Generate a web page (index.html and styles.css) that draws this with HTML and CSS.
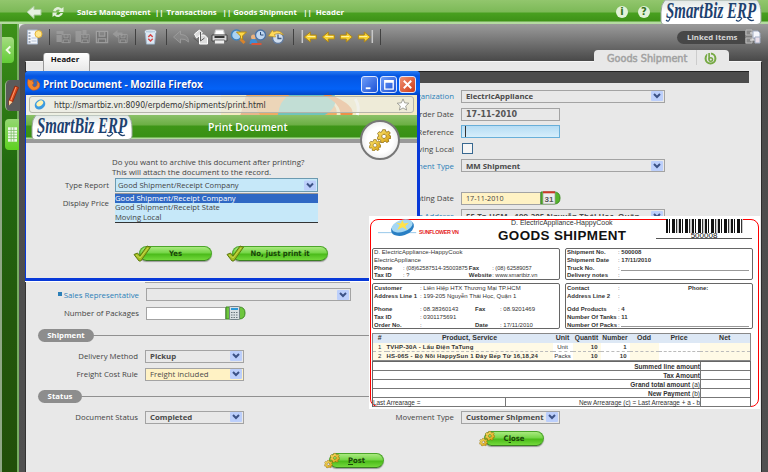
FILE: index.html
```html
<!DOCTYPE html>
<html lang="en">
<head>
<meta charset="utf-8">
<title>Goods Shipment</title>
<link rel="stylesheet" href="styles.css">
</head>
<body>
<svg class="defs" width="0" height="0">
  <defs>
    <linearGradient id="gold" x1="0" y1="0" x2="1" y2="1"><stop offset="0" stop-color="#ffe873"/><stop offset="1" stop-color="#d39a08"/></linearGradient>
    <linearGradient id="logobg" x1="0" y1="0" x2="0" y2="1"><stop offset="0" stop-color="#dfe6e4"/><stop offset=".5" stop-color="#fff"/></linearGradient>
    <symbol id="gear" viewBox="0 0 20 20"><path d="M8 1h4l.5 2.6 1.8.8L16.600 3 19 5.700 17.300 7.700l.6 1.700 2.100.8-.5 3.400-2.500.2-1 1.700 1 2.100-3 1.800-1.800-1.700-2 .1L8.500 20 5.200 18.800l.2-2.500L4 15l-2.600.3L0 12l2.200-1.300.1-2L.7 6.600 3 3.800l2.300.9L7.200 3.600ZM10 7.500a3 3 0 1 0 .01 0Z" fill="url(#gold)" stroke="#805f08" stroke-width="1" fill-rule="evenodd"/></symbol>
    <symbol id="gears" viewBox="0 0 24 24"><use href="#gear" x="9" y="1" width="14" height="14"/><use href="#gear" x="1" y="11" width="12" height="12"/></symbol>
    <symbol id="check" viewBox="0 0 18 17"><path d="M1 9.500 4.500 8 7 11 14 1 17.500 2.200 7.800 16H6Z" fill="#a3bd20" stroke="#5c7a10"/><path d="M3 10 7 13 15 3" fill="none" stroke="#c7d851"/></symbol>
    <symbol id="arrow" viewBox="0 0 14 12"><path d="M1 6 7 1v3h6v4H7v3Z" fill="#f7d231" stroke="#ad841b"/><path d="M4 5.500h8" stroke="#fff2a0"/></symbol>
    <symbol id="chev" viewBox="0 0 12 10"><rect width="12" height="10" rx="1" fill="#bccffb"/><path d="M3 3 6 6 9 3" fill="none" stroke="#3c5286" stroke-width="2"/></symbol>
    <symbol id="logo" viewBox="0 0 102 25"><path d="M5 0H97Q101 4 101 14V21Q101 24.500 97 24.500H4Q1 24.500 1 21V12Q1 4 5 0Z" fill="url(#logobg)" stroke="#9aa79b"/><text x="6" y="18" textLength="90" lengthAdjust="spacingAndGlyphs" class="logo-text">SmartBiz ERP</text><path d="M10 18Q9 23 6 20M82 18Q79 23 76 20M87 17Q90 22 94 20" fill="none" stroke="#1d416f" stroke-width="1.200"/></symbol>
    <symbol id="save" viewBox="0 0 16 16"><path d="M2 2H14V14H2Z M5 2V7H11V2 M4 14V10H12V14" fill="#707070" stroke="#a9a9a9" stroke-width="1.300"/></symbol>
  </defs>
</svg>

<div class="app">
  <header class="topbar">
    <svg class="back" viewBox="0 0 16 14"><path d="M1 7 8 1V4.500H15V10H8V13.500Z" fill="#e5f1df" stroke="#a9cc9c"/></svg>
    <svg class="refresh" viewBox="0 0 14 14"><path d="M2 6A5 5 0 0 1 10.500 3.500L12.500 2V7H7.500L9 5A3 3 0 0 0 4.500 6.500ZM12 8A5 5 0 0 1 3.500 10.500L1.500 12V7.500H6.500L5 9.200A3 3 0 0 0 9.500 8Z" fill="#e1efda"/></svg>
    <nav class="crumbs"><span class="c1">Sales Management</span><span>||</span><span class="c2">Transactions</span><span>||</span><span class="c3">Goods Shipment</span><span>||</span><span class="c4">Header</span></nav>
    <span class="round">i</span><span class="round">?</span>
    <svg class="logo"><use href="#logo"/></svg>
  </header>

  <div class="body">
    <aside class="side">
      <div class="tab collapse"><svg viewBox="0 0 10 10"><path d="M7 1 3 5 7 9" fill="none" stroke="#f3ffe9" stroke-width="2.200"/></svg></div>
      <div class="tab edit"><svg viewBox="0 0 12 22"><path d="M8 1 11.500 2.500 5.500 17 2 20 2 15.500Z" fill="#dc4a1c" stroke="#8d2d13"/><path d="M2 15.500 5.500 17 2 20.500Z" fill="#f5d3a0"/><path d="M9 2 4 15" stroke="#ff9b6e"/></svg></div>
      <div class="tab grid"><svg viewBox="0 0 10 16"><rect width="10" height="16" fill="#eef9e9"/><path d="M0 3.500H10M0 6.500H10M0 9.500H10M0 12.500H10M3.500 0V16M6.500 0V16" stroke="#72b95a" stroke-width=".8"/></svg></div>
    </aside>

    <div class="work">
      <div class="toolbar">
        <svg class="ico" viewBox="0 0 18 16"><path d="M2 1H12V15H2Z" fill="#f3f6fb" stroke="#a9b8cc"/><path d="M3 4H5M3 7H5M3 10H5M3 13H5" stroke="#52627a"/><path d="M6 9H11M6 12H11" stroke="#b4c2d6"/><circle cx="13" cy="5" r="3.500" fill="#ffe68a" stroke="#e6b43a"/></svg>
        <i class="sep s1"></i>
        <svg class="ico off" viewBox="0 0 18 16"><path d="M2 2H9V5H2ZM2 6H7V13H2Z" fill="#a0a0a0"/><use href="#save" x="6" y="4" width="11" height="11"/></svg>
        <svg class="ico off" viewBox="0 0 18 16"><path d="M2 2H8V13H2ZM9 1H13V5H9Z" fill="#a0a0a0"/><use href="#save" x="6" y="4" width="11" height="11"/></svg>
        <svg class="ico off" viewBox="0 0 18 16"><use href="#save" x="2" y="0" width="15" height="16"/></svg>
        <svg class="ico off" viewBox="0 0 18 16"><path d="M1 5 6 1V3.500H11V7H6V9Z" fill="#a0a0a0"/><use href="#save" x="6" y="4" width="11" height="11"/></svg>
        <i class="sep s2"></i>
        <svg class="ico" viewBox="0 0 18 18"><path d="M3 3H15L13.500 17H4.500Z" fill="#dce8f3" stroke="#9eb5cb"/><ellipse cx="9" cy="3" rx="6.300" ry="1.800" fill="#b9cee0" stroke="#edf5fb"/><path d="M6.500 9 9 6.500 11.500 9M6.500 11 9 13.500 11.500 11" fill="none" stroke="#d64545" stroke-width="1.600"/></svg>
        <i class="sep s3"></i>
        <svg class="ico off" viewBox="0 0 18 16"><path d="M1 8 8 2V5.500Q16 5.500 16 13Q13 9.500 8 10V14Z" fill="#8a8a8a" stroke="#a5a5a5"/></svg>
        <svg class="ico" viewBox="0 0 18 16"><path d="M3 5 8 1 11 4 5 9ZM8 6H13L16 9V15H8Z" fill="#dcdcdc" stroke="#fff"/><path d="M2 9 7 13M9 3V12L13 9" fill="none" stroke="#5e5e5e"/></svg>
        <svg class="ico" viewBox="0 0 18 16"><path d="M5 1H13L14 6H4Z" fill="#fff" stroke="#ccc"/><path d="M1.500 6H16.500V12H1.500Z" fill="#d7d7d7" stroke="#444"/><path d="M4 8H14" stroke="#333" stroke-width="2"/><path d="M4 11H14V15H4Z" fill="#eee" stroke="#777"/></svg>
        <svg class="ico" viewBox="0 0 18 16"><path d="M10 9 15 14" stroke="#d8842c" stroke-width="3"/><circle cx="7" cy="6" r="5" fill="#aad3f3" stroke="#4282ba" stroke-width="1.500"/><path d="M7 3H17L13 7V11L11 9V7Z" fill="#ffda48" stroke="#b68a14"/></svg>
        <svg class="ico" viewBox="0 0 18 16"><circle cx="5" cy="8" r="2.500" fill="#eab27f"/><path d="M1 15Q1 10 5 10Q9 10 9 15Z" fill="#3f8ed4"/><circle cx="12" cy="6" r="5" fill="#bfd6f0" stroke="#4b72a4" stroke-width="1.400"/><path d="M12 3V6H15" fill="none" stroke="#2c4c78"/><path d="M3 15H13" stroke="#d9553a" stroke-width="2"/></svg>
        <svg class="ico" viewBox="0 0 18 16"><circle cx="10.500" cy="9" r="5.500" fill="#d0dff1" stroke="#62799a" stroke-width="1.400"/><path d="M10.500 5.500V9.500H14" fill="none" stroke="#3f5a7e" stroke-width="1.300"/><path d="M16 6Q12 0 6 3L5 1 1 7 8 8 7 5.500Q11 3 16 6Z" fill="#ffd95a" stroke="#ba9126" stroke-width=".7"/></svg>
        <i class="sep s4"></i>
        <svg class="ico ar" viewBox="0 0 18 16"><path d="M2 1V14" stroke="#c9c9c9" stroke-width="1.500"/><use href="#arrow" x="3" y="2" width="14" height="12"/></svg>
        <svg class="ico ar" viewBox="0 0 18 16"><use href="#arrow" x="2" y="2" width="14" height="12"/></svg>
        <svg class="ico ar flip" viewBox="0 0 18 16"><use href="#arrow" x="2" y="2" width="14" height="12"/></svg>
        <svg class="ico ar flip" viewBox="0 0 18 16"><path d="M2 1V14" stroke="#c9c9c9" stroke-width="1.500"/><use href="#arrow" x="3" y="2" width="14" height="12"/></svg>
        <i class="sep s5"></i>
        <div class="linked">Linked Items<svg viewBox="0 0 16 16"><path d="M1 1H7V6H1ZM1 9H7V14H1Z" fill="#888" stroke="#bbb"/><path d="M5 4H10M5 11H10M8 4V11" stroke="#eee"/><path d="M8 2H13L15 4V9H8Z" fill="#f4f6fb" stroke="#a3aec4"/><path d="M10 8H15V14H10Z" fill="#e9dfe9" stroke="#a3aec4"/></svg></div>
      </div>
      <div class="tabs">
        <div class="htab">Header</div>
        <div class="title"><span>Goods Shipment</span><svg viewBox="0 0 14 14"><circle cx="7" cy="7" r="5.300" fill="none" stroke="#76a944" stroke-width="2.200"/><path d="M5.500 0V7.500" stroke="#e8e8e8" stroke-width="4"/><path d="M5.500 1V8" stroke="#76a944" stroke-width="1.800"/><circle cx="7.300" cy="8" r="1.900" fill="none" stroke="#76a944" stroke-width="1.600"/></svg></div>
      </div>

      <main class="page">
        <div class="darkbar"></div>
        <div class="cols top">
          <div class="left">
            <div class="row"><label class="link">Address Line</label><div class="sel w205"><b>Shipping Line</b><svg><use href="#chev"/></svg></div></div>
            <div class="row"><label class="link"><u class="flag"></u>Sales Representative</label><div class="sel w205"><svg><use href="#chev"/></svg></div></div>
            <div class="row pk"><label>Number of Packages</label><div class="inp white"></div><svg class="btn-ico" viewBox="0 0 20 14"><path d="M0 1H13Q19 1 19 7T13 13H0Z" fill="#6ec63e" stroke="#3c8a22"/><rect x="3.500" y=".5" width="10" height="13" rx="1" fill="#d9dfe3" stroke="#76838a"/><path d="M5 3H12" stroke="#2c9ad8" stroke-width="2"/><path d="M5 6.500H12M5 9H12M5 11.500H12" stroke="#68757c" stroke-dasharray="1.500 1"/></svg></div>
          </div>
          <div class="right">
            <div class="row"><label class="link">Organization</label><div class="sel w204"><b>ElectricAppliance</b><svg><use href="#chev"/></svg></div></div>
            <div class="row"><label>Order Date</label><div class="inp big">17-11-2010</div></div>
            <div class="row r17"><label>Order Reference</label><div class="inp focus"></div></div>
            <div class="row r16"><label>Moving Local</label><i class="cb"></i></div>
            <div class="row r17"><label class="link">Document Type</label><div class="sel w204"><b>MM Shipment</b><svg><use href="#chev"/></svg></div></div>
            <div class="row date"><label>Accounting Date</label><div class="inp cream">17-11-2010</div><svg class="btn-ico" viewBox="0 0 20 14"><path d="M0 1H13Q19 1 19 7T13 13H0Z" fill="#56b52c" stroke="#3c8a22"/><rect x="2" y=".5" width="12" height="12.500" fill="#eee" stroke="#9b9b9b" stroke-width=".7"/><path d="M2 1.300H14" stroke="#cc3826" stroke-width="2"/><text x="3.500" y="10.500" class="cal">31</text></svg></div>
            <div class="row r17"><label class="link">Partner Address</label><div class="sel w204"><b class="addr">55 Tp HCM - 199-205 Nguyễn Thái Học, Quận</b><svg><use href="#chev"/></svg></div></div>
          </div>
        </div>
        <div class="section"><h2>Shipment</h2></div>
        <div class="row m"><label>Delivery Method</label><div class="sel w99"><b>Pickup</b><svg><use href="#chev"/></svg></div></div>
        <div class="row"><label>Freight Cost Rule</label><div class="sel w99 cream"><span>Freight included</span><svg><use href="#chev"/></svg></div></div>
        <div class="section s2"><h2 class="st">Status</h2></div>
        <div class="cols">
          <div class="row m"><label>Document Status</label><div class="sel w99"><b>Completed</b><svg><use href="#chev"/></svg></div></div>
          <div class="row m"><label>Movement Type</label><div class="sel w99"><b class="mt">Customer Shipment</b><svg><use href="#chev"/></svg></div></div>
        </div>
        <div class="close"><button class="pill"><svg><use href="#gears"/></svg><span>C<u>l</u>ose</span></button></div>
        <div class="post"><button class="pill"><svg><use href="#gears"/></svg><span><u>P</u>ost</span></button></div>
      </main>
    </div>
  </div>

  <section class="popup">
    <div class="ptitle">
      <svg class="fox" viewBox="0 0 14 14"><circle cx="7" cy="7" r="5.500" fill="#3a69b5"/><path d="M1 2Q3 4 6 3Q5 5 7 6Q4 8 7 10Q11 10 10 4Q14 6 12.500 10Q10 14 5 13Q-1 10 1 2Z" fill="#f2862c" stroke="#c2541c" stroke-width=".6"/></svg>
      <strong>Print Document - Mozilla Firefox</strong>
      <span class="wb"><svg viewBox="0 0 16 16"><path d="M4 12H9" stroke="#fff" stroke-width="2"/></svg></span><span class="wb"><svg viewBox="0 0 16 16"><path d="M4 4H13V13H4Z M4 5.500H13" fill="none" stroke="#fff" stroke-width="1.400"/></svg></span><span class="wb x"><svg viewBox="0 0 16 16"><path d="M4 4 12 12M12 4 4 12" stroke="#fff" stroke-width="2"/></svg></span>
    </div>
    <div class="urlbar">
      <svg class="art" viewBox="0 0 200 20" preserveAspectRatio="none"><rect width="200" height="20" fill="#f5eab9"/><path d="M26 0H100Q120 8 118 20H20Z" fill="#ee9a45"/><path d="M70 0H116Q120 12 106 20H58Q60 5 70 0Z" fill="#54b9b0"/><path d="M112 0Q137 10 134 20H122Q122 8 104 0Z" fill="#ee7a23"/><path d="M137 4Q142 12 139 20" fill="none" stroke="#fff" stroke-width="3"/><path d="M26 0 40 20H20Z" fill="#e7a876"/></svg>
      <div class="url"><svg viewBox="0 0 14 14"><ellipse cx="7" cy="7" rx="6" ry="5" transform="rotate(-35 7 7)" fill="#3b9be0"/><ellipse cx="7.500" cy="6" rx="4" ry="2.700" transform="rotate(-35 7 7)" fill="#fff3b0"/></svg><span>http://smartbiz.vn:8090/erpdemo/shipments/print.html</span><svg class="star" viewBox="0 0 14 14"><path d="M7 1 8.800 5.200 13.300 5.600 9.900 8.600 10.900 13 7 10.700 3.100 13 4.100 8.600.7 5.600 5.200 5.200Z" fill="#fff" stroke="#9c9c92"/></svg></div>
    </div>
    <div class="pgreen"><svg class="logo"><use href="#logo"/></svg><span>Print Document</span></div>
    <div class="pbody">
      <p>Do you want to archive this document after printing?<br>This will attach the document to the record.</p>
      <div class="prow"><label>Type Report</label><div class="combo"><span>Good Shipment/Receipt Company</span><svg><use href="#chev"/></svg></div></div>
      <div class="prow p2"><label>Display Price</label></div>
      <div class="pbtns"><button class="pill"><svg><use href="#check"/></svg><span>Yes</span></button><button class="pill no"><svg><use href="#check"/></svg><span>No, just print it</span></button></div>
    </div>
    <ul class="menu"><li class="on">Good Shipment/Receipt Company</li><li>Good Shipment/Receipt State</li><li>Moving Local</li></ul>
    <div class="badge"><svg><use href="#gears"/></svg></div>
  </section>

  <section class="doc">
    <div class="sheet">
      <div class="dhead">
        <svg class="sun" viewBox="0 0 44 22"><path d="M0 15H42" stroke="#8dc2e8"/><ellipse cx="27" cy="10" rx="13" ry="8" transform="rotate(-18 27 10)" fill="#297fc4"/><ellipse cx="27" cy="7.500" rx="12" ry="6.500" transform="rotate(-18 27 9)" fill="#a5d7f3"/><path d="M27 1 28.500 5 34 4 30 8 32 12 27 9 21 12 24 7 20 4 25 5Z" fill="#ffe24a"/></svg>
        <span class="sf">SUNFLOWER VN</span>
        <div class="dt"><small>D. ElectricAppliance-HappyCook</small><h1>GOODS SHIPMENT</h1></div>
        <div class="code"><div class="bars"></div><span>500008</span></div>
      </div>
      <div class="boxes">
        <div class="box b1"><p class="co">D. ElectricAppliance-HappyCook</p><p class="co">ElectricAppliance</p><p><b>Phone</b><span>: (08)62587514-35003875</span><b class="k2">Fax</b><span>: (08) 62589057</span></p><p><b>Tax ID</b><span>: ?</span><b class="k2">Website</b><span>: www.smartbiz.vn</span></p></div>
        <div class="box b2"><p><b>Shipment No.</b><span>: <b>500008</b></span></p><p><b>Shipment Date</b><span>: <b>17/11/2010</b></span></p><p><b>Truck No.</b><span class="dots">:</span></p><p><b>Delivery notes</b><span>:</span></p></div>
        <div class="box b3"><p><b>Customer</b><span>: Liên Hiệp HTX Thương Mại TP.HCM</span></p><p><b>Address Line 1</b><span>: 199-205 Nguyễn Thái Học, Quận 1</span></p><p class="gap"><b>Phone</b><span>: 08.38360143</span><b class="k2">Fax</b><span>: 08.9201469</span></p><p><b>Tax ID</b><span>: 0301175691</span></p><p><b>Order No.</b><span>:</span><b class="k2">Date</b><span>: 17/11/2010</span></p></div>
        <div class="box b4"><p><b>Contact</b><span>:</span><b class="k3">Phone:</b></p><p><b>Address Line 2</b><span>:</span></p><p class="gap"><b>Odd Products</b><span>: <b>4</b></span></p><p><b>Number Of Tanks</b><span>: <b>11</b></span></p><p><b>Number Of Packs</b><span class="dots">:</span></p></div>
      </div>
      <table class="items">
        <colgroup><col class="k14"><col class="k166"><col class="k20"><col class="k28"><col class="k29"><col class="k29"><col class="k41"><col></colgroup>
        <tr class="th"><th>#</th><th>Product, Service</th><th>Unit</th><th>Quantit</th><th>Number</th><th>Odd</th><th>Price</th><th>Net</th></tr>
        <tr><td class="y c">1</td><td class="y pn"><b>TVHP-30A - Lẩu Điện TaTung</b></td><td class="c">Unit</td><td class="y r"><b>10</b></td><td class="r"><b>1</b></td><td class="y"></td><td></td><td class="y"></td></tr>
        <tr class="dash"><td class="y c">2</td><td class="y pn"><b>HS-06S - Bộ Nồi HappySun 1 Đáy Bếp Từ 16,18,24</b></td><td class="c">Packs</td><td class="y r"><b>10</b></td><td class="r"><b>10</b></td><td class="y"></td><td></td><td class="y"></td></tr>
      </table>
      <div class="sum"><p><b>Summed line amount</b></p><i></i><p><b>Tax Amount</b></p><i></i><p><span><b>Grand total amount</b> (a)</span></p><i></i><p><span><b>New Payment</b> (b)</span></p><i></i><p class="last"><span>Last Arrearage =</span><em>New Arrearage (c) = Last Arrearage + a - b</em></p><i></i></div>
    </div>
  </section>
</div>
</body>
</html>
```
FILE: styles.css
```css
* { box-sizing: border-box; margin: 0; padding: 0; }
body { width: 768px; height: 472px; overflow: hidden; font: 7.800px/10px "Open Sans", sans-serif; color: #444; background: #e8e8e8; }
svg { display: block; flex: none; overflow: visible; }
.defs { position: absolute; }
.app { position: relative; height: 472px; display: flex; flex-direction: column; overflow: hidden; }
.logo-text { font: italic bold 23px "Liberation Serif", serif; fill: #1d416f; }

.topbar { height: 24px; flex: none; display: flex; align-items: center; padding-right: 6px; background: linear-gradient(#92c66d 0, #7cb957 12px, #48a01f 13px, #3e9217 21px, #b4dba0 22px, #b4dba0 24px); }
.back { width: 16px; height: 14px; margin-left: 26px; }
.refresh { width: 14px; height: 14px; margin-left: 9px; }
.crumbs { display: flex; margin-left: 12px; margin-right: auto; color: #fff; font: bold 7.800px/10px "Open Sans", sans-serif; white-space: nowrap; }
.crumbs .c1 { width: 78px; }
.crumbs .c2 { width: 56px; margin-left: 3px; }
.crumbs .c3 { width: 70px; margin-left: 2px; }
.crumbs .c4 { margin-left: 4px; }
.round { width: 12px; height: 12px; border-radius: 50%; margin-right: 10px; background: #e2f2d9; color: #34711c; font: bold 10px/12px "DejaVu Sans", sans-serif; text-align: center; }
.logo { width: 102px; height: 25px; }
.topbar .logo { margin-left: 10px; align-self: flex-start; }
.round + .round { margin-right: 0; }

.body { flex: 1; display: flex; min-height: 0; }
.side { width: 19px; flex: none; display: flex; flex-direction: column; align-items: flex-start; border-left: 2px solid #8fa785; border-right: 2px solid #77ad62; background: linear-gradient(#3d9119 0, #226a10 140px, #23580c 300px, #214f09 100%); }
.tab { display: flex; align-items: center; justify-content: center; }
.collapse { width: 12px; height: 26px; margin-top: 13px; border-radius: 0 4px 4px 0; background: linear-gradient(#a5dc82, #63cc36); }
.collapse svg { width: 9px; height: 12px; }
.edit { width: 15px; height: 31px; margin: 17px 0 0 3px; border-radius: 5px 0 0 5px; background: #5b5b5b; border-left: 1px solid #9dbe8d; z-index: 1; }
.edit svg { width: 12px; height: 22px; }
.grid { width: 14px; height: 31px; margin: 8px 0 0 3px; border-radius: 4px 0 0 4px; background: linear-gradient(#94d772, #5ed120); }
.grid svg { width: 9px; height: 15px; }

.work { flex: 1; display: flex; flex-direction: column; background: linear-gradient(#9b9b9b, #4b4b4b 36px, #505050 100%); border-radius: 6px 0 0 0; }
.toolbar { height: 26px; flex: none; display: flex; align-items: center; padding: 0 7px 0 6px; }
.ico { width: 19px; height: 16px; }
.ico.ar { width: 18.600px; }
.ico.off { opacity: .75; }
.flip { transform: scaleX(-1); }
.sep { width: 12px; height: 16px; flex: none; background: linear-gradient(#414141, #414141) center / 1px 100% no-repeat; }
.sep.s1 { width: 10px; }
.sep.s2 { width: 11px; }
.sep.s4 { width: 14px; }
.linked { height: 13px; width: 84px; margin-left: auto; display: flex; align-items: center; border-radius: 7px 0 0 7px; padding-left: 10px; background: linear-gradient(90deg, #474747 68px, transparent 68px); color: #d6d6d6; font-weight: 700; white-space: nowrap; }
.linked svg { width: 16px; height: 16px; margin-left: auto; }
.tabs { height: 11px; flex: none; display: flex; align-items: flex-start; padding-left: 24px; padding-right: 39px; }
.htab { width: 47px; height: 18px; margin-top: 3px; z-index: 1; padding: 2px 3px 0 0; border-radius: 3px 3px 0 0; text-align: center; color: #111; font-weight: 700; line-height: 9px; background: linear-gradient(#fff, #e8e8e8); border: 1px solid #999; border-width: 0 1px; }
.title { margin-left: auto; width: 135px; height: 12px; z-index: 1; display: flex; padding-left: 13px; border-radius: 4px 4px 0 0; background: #e8e8e8; font: 10.800px/17px "DejaVu Sans Condensed", sans-serif; color: #a2a2a2; white-space: nowrap; -webkit-text-stroke: .5px #a2a2a2; }
.title span { width: 90px; border-right: 1px solid #ccc; height: 15px; }
.title svg { width: 13px; height: 13px; margin: 2px 0 0 7px; }

.page { flex: 1; margin: 0 6px; background: #e8e8e8; border-top: 1px solid #f7f7f7; border-right: 1px solid #2c2c2c; border-left: 1px solid #333; }
.darkbar { height: 12px; margin: 9px 12px 0 0; background: #4c4c4c; border-top: 1px solid #222; }
.cols { display: grid; grid-template-columns: 315px 1fr; }
.top { height: 243px; }
.left { padding-top: 184px; }
.right { padding-top: 4px; }
.row { display: flex; align-items: center; height: 18px; }
.row label { width: 112px; margin-right: 7px; text-align: right; white-space: nowrap; flex: none; }
.right .row label, .cols .row + .row label { width: 113px; }
.left .row { height: 18.500px; }
.r17.row { height: 17px; }
.r16.row { height: 17px; }
.row.date { margin-top: 15px; }
.link { color: #2b7fb8; }
.flag { display: inline-block; width: 4px; height: 4px; margin-right: 2px; vertical-align: 2px; background: #2b7fb8; }
.sel { height: 13px; flex: none; display: flex; align-items: center; padding: 0 1px 0 4px; border: 1px solid #a3a3a3; overflow: hidden; white-space: nowrap; color: #4a4a4a; }
.sel svg { width: 12px; height: 10px; margin-left: auto; }
.w205 { width: 205px; }
.w204 { width: 204px; }
.w99 { width: 99px; }
.addr { letter-spacing: .1px; }
.cream { background: #fff2c4; }
.inp { width: 99px; height: 13px; border: 1px solid #a3a3a3; padding-left: 4px; line-height: 11px; flex: none; }
.inp.big { font: bold 8px/11px "DejaVu Sans", sans-serif; color: #555; }
.inp.focus { border-color: #68afd9; background: linear-gradient(#b5dcf4, #d6eefb); }
.inp.focus::before { content: ""; display: block; width: 1px; height: 11px; background: #333; margin-left: -1px; }
.inp.white { width: 80px; background: #fff; }
.inp.cream { width: 80px; font-size: 7.200px; }
.btn-ico { width: 20px; height: 14px; }
.cal { font: bold 8px "Liberation Sans", sans-serif; fill: #555; }
.cb { width: 11px; height: 11px; margin-left: 1px; background: #f5f5f5; border: 1px solid #386890; }
.section { display: flex; align-items: center; height: 18px; padding: 0 12px; }
.section::after { content: ""; flex: 1; height: 1px; background: #909090; }
.section h2 { width: 56px; height: 13px; border-radius: 7px; background: #8d8d8d; color: #fff; font: bold 7.800px/13px "Open Sans", sans-serif; text-align: center; }
.section .st { width: 44px; }
.section.s2 { margin-top: 4px; }
.row.m { margin-top: 3px; }

.pill { display: flex; align-items: center; border: 0; background: none; font: bold 7.600px/14px "DejaVu Sans Condensed", sans-serif; color: #194608; white-space: nowrap; }
.pill svg { width: 18px; height: 17px; z-index: 1; margin-right: -12px; }
.pill span { flex: 1; height: 15px; border-radius: 8px; border: 1px solid #4ca62a; border-bottom-color: #3b8023; background: linear-gradient(#a9e97f, #75d647 45%, #4bbb1a 55%, #73d93b); text-align: center; box-shadow: 0 1px 1px #999; }
.pill span u { text-underline-offset: 1px; }
.close { display: flex; padding: 4px 0 0 452px; }
.close .pill { width: 66px; }
.post { display: flex; padding: 5px 0 0 297px; }
.post .pill { width: 61px; }

.popup { position: absolute; left: 25px; top: 71px; width: 395px; height: 210px; z-index: 3; background: #e8e8e8; border: solid #0839d8; border-width: 0 3px 3px 1px; border-radius: 4px 4px 0 0; display: flex; flex-direction: column; box-shadow: 0 1px 0 #fff; }
.ptitle { height: 24px; flex: none; margin: 0 -3px 0 -1px; padding: 2px 4px 0 2px; border-radius: 4px 4px 0 0; display: flex; align-items: center; color: #fff; background: linear-gradient(#2a7cf2 0, #0455e2 5px, #0462f7 18px, #0146c7); }
.fox { width: 14px; height: 14px; margin-right: 2px; }
.ptitle strong { font: bold 9.950px/12px "Open Sans", sans-serif; margin-right: auto; text-shadow: 1px 1px #0a309a; white-space: nowrap; }
.wb { width: 17px; height: 17px; margin-left: 2px; border: 1px solid #dbe6ff; border-radius: 3px; background: linear-gradient(135deg, #6d9cf9, #1c51d5); }
.wb svg { width: 15px; height: 15px; }
.wb.x { background: linear-gradient(135deg, #f09172, #cf3a16); }
.urlbar { height: 20px; flex: none; position: relative; background: #edf0e3; padding: 1px 3px; }
.art { position: absolute; left: 195px; top: 0; width: 196px; height: 20px; opacity: .8; }
.url { position: relative; height: 17px; display: flex; align-items: center; border: 1px solid #b4b4aa; border-radius: 3px; padding: 0 3px; background: #ecece3a8; color: #333; font: 8.600px/14px "DejaVu Sans Condensed", sans-serif; }
.url span { margin-left: 7px; margin-right: auto; white-space: nowrap; letter-spacing: -.02px; }
.url svg { width: 14px; height: 13px; }
.pgreen { height: 28px; flex: none; display: flex; padding-left: 5px; border-bottom: 4px solid #999; background: linear-gradient(#8bc168 0, #6bae43 10px, #3f9618 11px, #389013 22px, #b4dba0 23px); color: #fff; font: 600 10.400px/24px "Open Sans", sans-serif; }
.pgreen span { margin-left: 75px; }
.pbody { flex: 1; padding-top: 15px; }
.pbody p { margin-left: 86px; line-height: 9.500px; font-size: 7.850px; white-space: nowrap; }
.prow { display: flex; align-items: center; height: 14px; margin-top: 1px; }
.prow label { width: 83px; margin-right: 6px; text-align: right; white-space: nowrap; }
.prow.p2 { margin-top: 4px; }
.combo { width: 203px; height: 14px; display: flex; align-items: center; justify-content: space-between; padding: 0 1px 0 2px; border: 1px solid #6c9ab0; background: #c6e8f9; white-space: nowrap; font-size: 7.650px; }
.combo svg { width: 12px; height: 11px; }
.pbtns { display: flex; gap: 14px; margin: 35px 0 0 107px; }
.pbtns .pill { width: 79px; }
.pbtns .pill.no { width: 102px; }
.menu { position: absolute; left: 89px; top: 122px; width: 203px; list-style: none; background: #c6e8f9; border-top: 1px solid #999; border-bottom: 1px solid #333; line-height: 9.400px; font-size: 7.650px; }
.menu li.on { background: #2f68c4; color: #fff; }
.badge { position: absolute; left: 334px; top: 49px; width: 40px; height: 40px; border-radius: 50%; border: 2px solid #777; background: radial-gradient(#fff 50%, #ddd); display: flex; align-items: center; justify-content: center; }
.badge svg { width: 24px; height: 24px; }

.doc { position: absolute; left: 369px; top: 216px; width: 391px; height: 193px; z-index: 4; background: #fff; padding: 3px 1px 2px 1px; font: 6px/8px "Liberation Sans", sans-serif; color: #333; }
.sheet { height: 188px; border: 1px solid #f00; border-radius: 8px; padding: 0 6px 0 1px; display: flex; flex-direction: column; }
.sheet p { white-space: nowrap; }
.dhead { display: flex; height: 28px; flex: none; }
.sun { width: 44px; height: 20px; margin: -1px 0 0 4px; }
.sf { margin: 8px 0 0 -1px; width: 42px; color: #e52222; font: bold 5.400px/8px "Liberation Sans", sans-serif; white-space: nowrap; letter-spacing: -.35px; }
.dt { width: 131px; margin-left: 37px; white-space: nowrap; }
.dt small { display: block; margin: -1px 0 0 13px; font-size: 7px; line-height: 8px; }
.dt h1 { font: bold 13.400px/13px "Liberation Sans", sans-serif; letter-spacing: .4px; margin-top: 2px; color: #111; }
.code { width: 96px; margin-left: auto; }
.bars { height: 14px; margin: -1px 9px 0 10px; background: repeating-linear-gradient(90deg, #111 0 2px, #fff 2px 3px, #111 3px 4px, #fff 4px 6px, #111 6px 9px, #fff 9px 10px, #333 10px 11px, #ccc 11px 13px); }
.code span { display: block; text-align: center; border-bottom: 1px solid #555; font-size: 8px; line-height: 5px; height: 6px; color: #111; }
.boxes { display: grid; grid-template-columns: 188px 188px; column-gap: 5px; row-gap: 3px; }
.box { border: 1px solid #666; border-radius: 2px; padding: 0 1px; }
.b1, .b2 { height: 32px; }
.b3, .b4 { height: 46px; }
.box p { display: flex; line-height: 7.800px; height: 7.800px; }
.box .co { letter-spacing: .05px; }
.b3 p, .b4 p { height: 8px; line-height: 8px; }
.box .gap { margin-top: 5px; }
.box p > b { width: 31px; }
.box p > span { width: 70px; }
.b1 p > span { font-size: 5.700px; letter-spacing: -.05px; }
.b3 p > b { width: 46px; }
.b3 p > span { width: 55px; }
.box p > .k2 { width: 25px; }
.b2 p > b, .b4 p > b { width: 51px; }
.box .dots { width: 131px; background: linear-gradient(#999, #999) 3px 5px / 100% 1px no-repeat; }
.items { width: 379px; margin-top: 4px; border-collapse: collapse; table-layout: fixed; border: 1px solid #888; line-height: 8px; }
.k14 { width: 14px; } .k166 { width: 166px; } .k20 { width: 20px; } .k28 { width: 28px; } .k29 { width: 29px; } .k41 { width: 41px; }
.items tr { height: 9px; }
.items th { background: #dde8f5; font-size: 7px; }
.items th:nth-child(4), .items th:nth-child(5) { font-size: 6.700px; }
.items td { white-space: nowrap; height: 9px; }
.items .y { background: #fffae6; }
.items .pn { letter-spacing: .2px; }
.items .c { text-align: center; }
.items .r { text-align: right; padding-right: 3px; }
.items .dash td { border-top: 1px dashed #bbb; }
.sum { width: 379px; display: grid; grid-template-columns: 328px 1fr; border: 1px solid #666; border-bottom: 0; font-size: 6.500px; }
.sum p, .sum i { height: 9px; border-bottom: 1px solid #777; }
.sum p { text-align: right; border-right: 1px solid #777; line-height: 9px; }
.sum .last { display: flex; font-size: 6.400px; }
.sum .last span { width: 133px; text-align: left; border-right: 1px solid #777; }
.sum em { font-style: normal; margin-left: auto; }
```
